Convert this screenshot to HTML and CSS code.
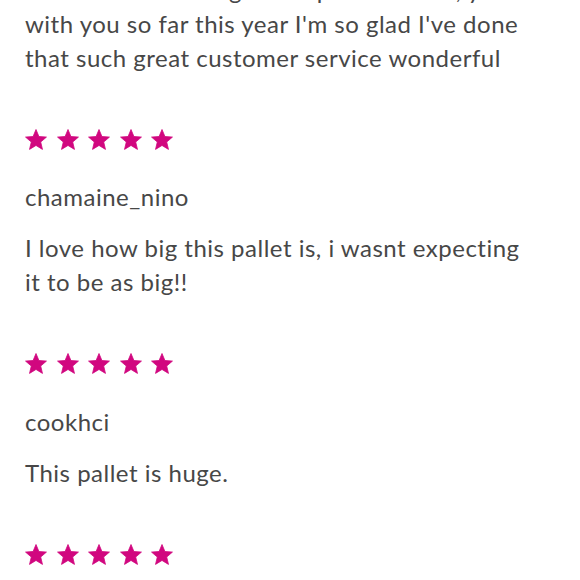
FILE: index.html
```html
<!DOCTYPE html>
<html lang="en">
<head>
  <meta charset="UTF-8">
  <title>Reviews</title>
  <link rel="stylesheet" href="styles.css">
</head>
<body>
  <div class="reviews">
    <div class="review">
      <div class="stars">
        <svg viewBox="1 1 22 21"><polygon points="12,1.5 14.91,8.5 22.46,9.1 16.71,14.03 18.47,21.4 12,17.45 5.53,21.4 7.29,14.03 1.54,9.1 9.09,8.5"/></svg>
        <svg viewBox="1 1 22 21"><polygon points="12,1.5 14.91,8.5 22.46,9.1 16.71,14.03 18.47,21.4 12,17.45 5.53,21.4 7.29,14.03 1.54,9.1 9.09,8.5"/></svg>
        <svg viewBox="1 1 22 21"><polygon points="12,1.5 14.91,8.5 22.46,9.1 16.71,14.03 18.47,21.4 12,17.45 5.53,21.4 7.29,14.03 1.54,9.1 9.09,8.5"/></svg>
        <svg viewBox="1 1 22 21"><polygon points="12,1.5 14.91,8.5 22.46,9.1 16.71,14.03 18.47,21.4 12,17.45 5.53,21.4 7.29,14.03 1.54,9.1 9.09,8.5"/></svg>
        <svg viewBox="1 1 22 21"><polygon points="12,1.5 14.91,8.5 22.46,9.1 16.71,14.03 18.47,21.4 12,17.45 5.53,21.4 7.29,14.03 1.54,9.1 9.09,8.5"/></svg>
      </div>
      <div class="author">louise_b</div>
      <p class="text">I have ordered a big home pallet before, you with you so far this year I'm so glad I've done that such great customer service wonderful</p>
    </div>

    <div class="review">
      <div class="stars">
        <svg viewBox="1 1 22 21"><polygon points="12,1.5 14.91,8.5 22.46,9.1 16.71,14.03 18.47,21.4 12,17.45 5.53,21.4 7.29,14.03 1.54,9.1 9.09,8.5"/></svg>
        <svg viewBox="1 1 22 21"><polygon points="12,1.5 14.91,8.5 22.46,9.1 16.71,14.03 18.47,21.4 12,17.45 5.53,21.4 7.29,14.03 1.54,9.1 9.09,8.5"/></svg>
        <svg viewBox="1 1 22 21"><polygon points="12,1.5 14.91,8.5 22.46,9.1 16.71,14.03 18.47,21.4 12,17.45 5.53,21.4 7.29,14.03 1.54,9.1 9.09,8.5"/></svg>
        <svg viewBox="1 1 22 21"><polygon points="12,1.5 14.91,8.5 22.46,9.1 16.71,14.03 18.47,21.4 12,17.45 5.53,21.4 7.29,14.03 1.54,9.1 9.09,8.5"/></svg>
        <svg viewBox="1 1 22 21"><polygon points="12,1.5 14.91,8.5 22.46,9.1 16.71,14.03 18.47,21.4 12,17.45 5.53,21.4 7.29,14.03 1.54,9.1 9.09,8.5"/></svg>
      </div>
      <div class="author">chamaine_nino</div>
      <p class="text">I love how big this pallet is, i wasnt expecting it to be as big!!</p>
    </div>

    <div class="review">
      <div class="stars">
        <svg viewBox="1 1 22 21"><polygon points="12,1.5 14.91,8.5 22.46,9.1 16.71,14.03 18.47,21.4 12,17.45 5.53,21.4 7.29,14.03 1.54,9.1 9.09,8.5"/></svg>
        <svg viewBox="1 1 22 21"><polygon points="12,1.5 14.91,8.5 22.46,9.1 16.71,14.03 18.47,21.4 12,17.45 5.53,21.4 7.29,14.03 1.54,9.1 9.09,8.5"/></svg>
        <svg viewBox="1 1 22 21"><polygon points="12,1.5 14.91,8.5 22.46,9.1 16.71,14.03 18.47,21.4 12,17.45 5.53,21.4 7.29,14.03 1.54,9.1 9.09,8.5"/></svg>
        <svg viewBox="1 1 22 21"><polygon points="12,1.5 14.91,8.5 22.46,9.1 16.71,14.03 18.47,21.4 12,17.45 5.53,21.4 7.29,14.03 1.54,9.1 9.09,8.5"/></svg>
        <svg viewBox="1 1 22 21"><polygon points="12,1.5 14.91,8.5 22.46,9.1 16.71,14.03 18.47,21.4 12,17.45 5.53,21.4 7.29,14.03 1.54,9.1 9.09,8.5"/></svg>
      </div>
      <div class="author">cookhci</div>
      <p class="text">This pallet is huge.</p>
    </div>

    <div class="review">
      <div class="stars">
        <svg viewBox="1 1 22 21"><polygon points="12,1.5 14.91,8.5 22.46,9.1 16.71,14.03 18.47,21.4 12,17.45 5.53,21.4 7.29,14.03 1.54,9.1 9.09,8.5"/></svg>
        <svg viewBox="1 1 22 21"><polygon points="12,1.5 14.91,8.5 22.46,9.1 16.71,14.03 18.47,21.4 12,17.45 5.53,21.4 7.29,14.03 1.54,9.1 9.09,8.5"/></svg>
        <svg viewBox="1 1 22 21"><polygon points="12,1.5 14.91,8.5 22.46,9.1 16.71,14.03 18.47,21.4 12,17.45 5.53,21.4 7.29,14.03 1.54,9.1 9.09,8.5"/></svg>
        <svg viewBox="1 1 22 21"><polygon points="12,1.5 14.91,8.5 22.46,9.1 16.71,14.03 18.47,21.4 12,17.45 5.53,21.4 7.29,14.03 1.54,9.1 9.09,8.5"/></svg>
        <svg viewBox="1 1 22 21"><polygon points="12,1.5 14.91,8.5 22.46,9.1 16.71,14.03 18.47,21.4 12,17.45 5.53,21.4 7.29,14.03 1.54,9.1 9.09,8.5"/></svg>
      </div>
      <div class="author">amy_lou</div>
      <p class="text">Really happy with my order.</p>
    </div>
  </div>
</body>
</html>
```

FILE: styles.css
```css
body {
  margin: 0;
  background-color: #ffffff;
  font-family: Lato, 'Open Sans', sans-serif;
  font-size: 24px;
  line-height: 34px;
  letter-spacing: 0.5px;
  color: #474747;
  overflow: hidden;
}
.reviews {
  margin-top: -130px;
  padding: 0 55px 0 25px;
}
.review {
  margin-bottom: 54px;
}
.stars {
  display: flex;
  gap: 9.5px;
  height: 22px;
  margin-bottom: 29.5px;
}
.stars svg {
  width: 22px;
  height: 21px;
  fill: #d1077f;
  stroke: #d1077f;
  stroke-width: 0.8;
  stroke-linejoin: round;
}
.author {
  margin-bottom: 17px;
}
.text {
  margin: 0;
}
```
